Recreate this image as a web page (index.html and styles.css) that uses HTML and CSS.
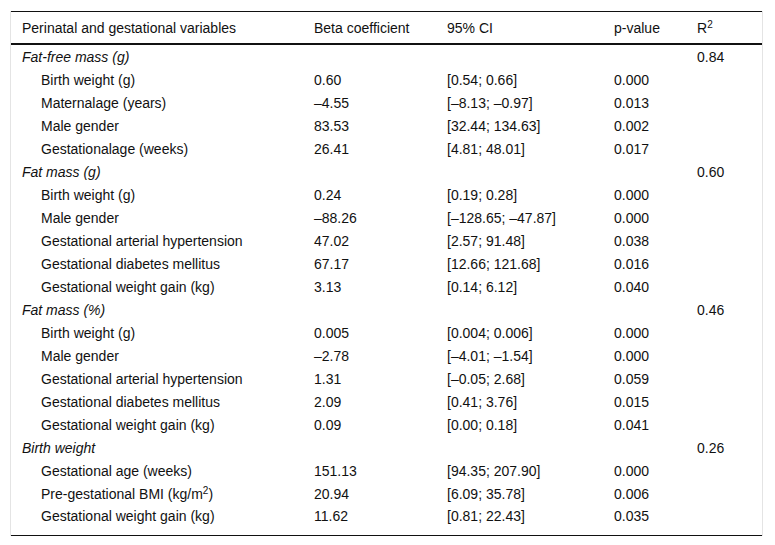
FILE: index.html
```html
<!DOCTYPE html>
<html>
<head>
<meta charset="utf-8">
<link rel="stylesheet" href="styles.css">
</head>
<body>
<div class="frame">
<table class="tbl">
<colgroup>
<col class="c1"><col class="c2"><col class="c3"><col class="c4"><col class="c5">
</colgroup>
<thead>
<tr><th>Perinatal and gestational variables</th><th>Beta coefficient</th><th>95% CI</th><th>p-value</th><th>R<sup>2</sup></th></tr>
</thead>
<tbody>
<tr class="grp"><td>Fat-free mass (g)</td><td></td><td></td><td></td><td class="r2">0.84</td></tr>
<tr><td class="sub">Birth weight (g)</td><td>0.60</td><td>[0.54; 0.66]</td><td>0.000</td><td></td></tr>
<tr><td class="sub">Maternalage (years)</td><td>–4.55</td><td>[–8.13; –0.97]</td><td>0.013</td><td></td></tr>
<tr><td class="sub">Male gender</td><td>83.53</td><td>[32.44; 134.63]</td><td>0.002</td><td></td></tr>
<tr><td class="sub">Gestationalage (weeks)</td><td>26.41</td><td>[4.81; 48.01]</td><td>0.017</td><td></td></tr>
<tr class="grp"><td>Fat mass (g)</td><td></td><td></td><td></td><td class="r2">0.60</td></tr>
<tr><td class="sub">Birth weight (g)</td><td>0.24</td><td>[0.19; 0.28]</td><td>0.000</td><td></td></tr>
<tr><td class="sub">Male gender</td><td>–88.26</td><td>[–128.65; –47.87]</td><td>0.000</td><td></td></tr>
<tr><td class="sub">Gestational arterial hypertension</td><td>47.02</td><td>[2.57; 91.48]</td><td>0.038</td><td></td></tr>
<tr><td class="sub">Gestational diabetes mellitus</td><td>67.17</td><td>[12.66; 121.68]</td><td>0.016</td><td></td></tr>
<tr><td class="sub">Gestational weight gain (kg)</td><td>3.13</td><td>[0.14; 6.12]</td><td>0.040</td><td></td></tr>
<tr class="grp"><td>Fat mass (%)</td><td></td><td></td><td></td><td class="r2">0.46</td></tr>
<tr><td class="sub">Birth weight (g)</td><td>0.005</td><td>[0.004; 0.006]</td><td>0.000</td><td></td></tr>
<tr><td class="sub">Male gender</td><td>–2.78</td><td>[–4.01; –1.54]</td><td>0.000</td><td></td></tr>
<tr><td class="sub">Gestational arterial hypertension</td><td>1.31</td><td>[–0.05; 2.68]</td><td>0.059</td><td></td></tr>
<tr><td class="sub">Gestational diabetes mellitus</td><td>2.09</td><td>[0.41; 3.76]</td><td>0.015</td><td></td></tr>
<tr><td class="sub">Gestational weight gain (kg)</td><td>0.09</td><td>[0.00; 0.18]</td><td>0.041</td><td></td></tr>
<tr class="grp"><td>Birth weight</td><td></td><td></td><td></td><td class="r2">0.26</td></tr>
<tr><td class="sub">Gestational age (weeks)</td><td>151.13</td><td>[94.35; 207.90]</td><td>0.000</td><td></td></tr>
<tr><td class="sub">Pre-gestational BMI (kg/m<sup>2</sup>)</td><td>20.94</td><td>[6.09; 35.78]</td><td>0.006</td><td></td></tr>
<tr><td class="sub">Gestational weight gain (kg)</td><td>11.62</td><td>[0.81; 22.43]</td><td>0.035</td><td></td></tr>
</tbody>
</table>
</div>
</body>
</html>
```

FILE: styles.css
```css
html, body {
  margin: 0;
  padding: 0;
  background: #fff;
}
body {
  font-family: "Liberation Sans", Arial, sans-serif;
  font-size: 14px;
  color: #111;
}
.frame {
  margin: 11px 10px 0 10px;
  width: 753px;
  border-left: 1px solid #e4e4e4;
  border-right: 1px solid #e4e4e4;
  box-sizing: border-box;
}
.tbl {
  width: 100%;
  border-collapse: collapse;
  table-layout: fixed;
}
.c1 { width: 292px; }
.c2 { width: 133px; }
.c3 { width: 167px; }
.c4 { width: 83px; }
.c5 { width: auto; }
.tbl thead tr {
  border-top: 1px solid #111;
  border-bottom: 2px solid #111;
}
.tbl th {
  font-weight: normal;
  text-align: left;
  height: 31px;
  padding: 0 0 0 11px;
  vertical-align: middle;
}
.tbl td {
  height: 23px;
  padding: 0 0 0 11px;
  vertical-align: middle;
  white-space: nowrap;
  line-height: 16px;
}
.tbl tbody tr:last-child {
  border-bottom: 1px solid #111;
}
.tbl tbody tr:last-child td {
  height: 27px;
  vertical-align: top;
  padding-top: 3px;
}
.grp td:first-child {
  font-style: italic;
}
.tbl td.sub {
  padding-left: 30px;
}
sup {
  font-size: 10px;
  line-height: 0;
  vertical-align: 5px;
}
```
